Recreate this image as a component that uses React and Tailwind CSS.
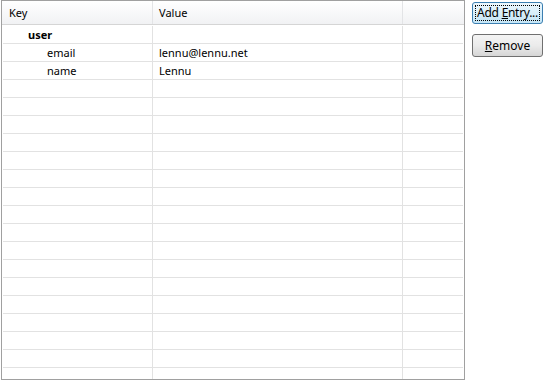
import React from "react";

const rows = [
  { key: "user", value: "", cls: "pl-[25px] font-bold" },
  { key: "email", value: "lennu@lennu.net", cls: "pl-[44px]" },
  { key: "name", value: "Lennu", cls: "pl-[44px]" },
];

export default function App() {
  const all = [...rows];
  while (all.length < 19) all.push({ key: "", value: "", cls: "" });
  return (
    <div className="flex w-[548px] h-[386px] bg-white text-black font-['Noto_Sans',sans-serif] text-[11px] leading-none">
      <div className="ml-px w-[464px] h-[380px] border border-[#a0a0a0] flex flex-col overflow-hidden">
        <div className="h-[24px] shrink-0 flex border-b border-[#d5d5d5] bg-gradient-to-b from-white to-[#f1f2f4]">
          <div className="w-[151px] flex items-center pl-[7px] pb-px border-r border-[#e3e4e6]">Key</div>
          <div className="w-[250px] flex items-center pl-[6px] pb-px border-r border-[#e3e4e6]">Value</div>
          <div className="flex-1" />
        </div>
        <div className="h-px shrink-0" />
        <div className="flex-1 flex flex-col px-px">
          {all.map((r, i) => (
            <div key={i} className="h-[18px] shrink-0 flex border-b border-[#e2e2e2]">
              <div className={"w-[150px] flex items-center border-r border-[#e2e2e2] " + r.cls}>{r.key}</div>
              <div className="w-[250px] flex items-center pl-[6px] border-r border-[#e2e2e2]">{r.value}</div>
              <div className="flex-1" />
            </div>
          ))}
          <div className="flex-1 flex">
            <div className="w-[150px] border-r border-[#e2e2e2]" />
            <div className="w-[250px] border-r border-[#e2e2e2]" />
            <div className="flex-1" />
          </div>
        </div>
      </div>
      <div className="ml-[7px] flex flex-col text-[12px]">
        <div className="mt-[2px] w-[71px] h-[22px] rounded-[3px] border border-[#3c7fb1] bg-gradient-to-b from-[#ecf7fd] to-[#c4e5f6] p-[2px]">
          <div className="w-full h-full border border-dotted border-black flex items-center justify-center whitespace-nowrap tracking-[-0.3px]">
            Add <span className="underline ml-[3px]">E</span>ntry...
          </div>
        </div>
        <div className="mt-[10px] w-[71px] h-[23px] rounded-[3px] border border-[#707070] bg-gradient-to-b from-[#f4f4f4] via-[#ebebeb] to-[#d6d6d6] flex items-center justify-center">
          <span><span className="underline">R</span>emove</span>
        </div>
      </div>
    </div>
  );
}
